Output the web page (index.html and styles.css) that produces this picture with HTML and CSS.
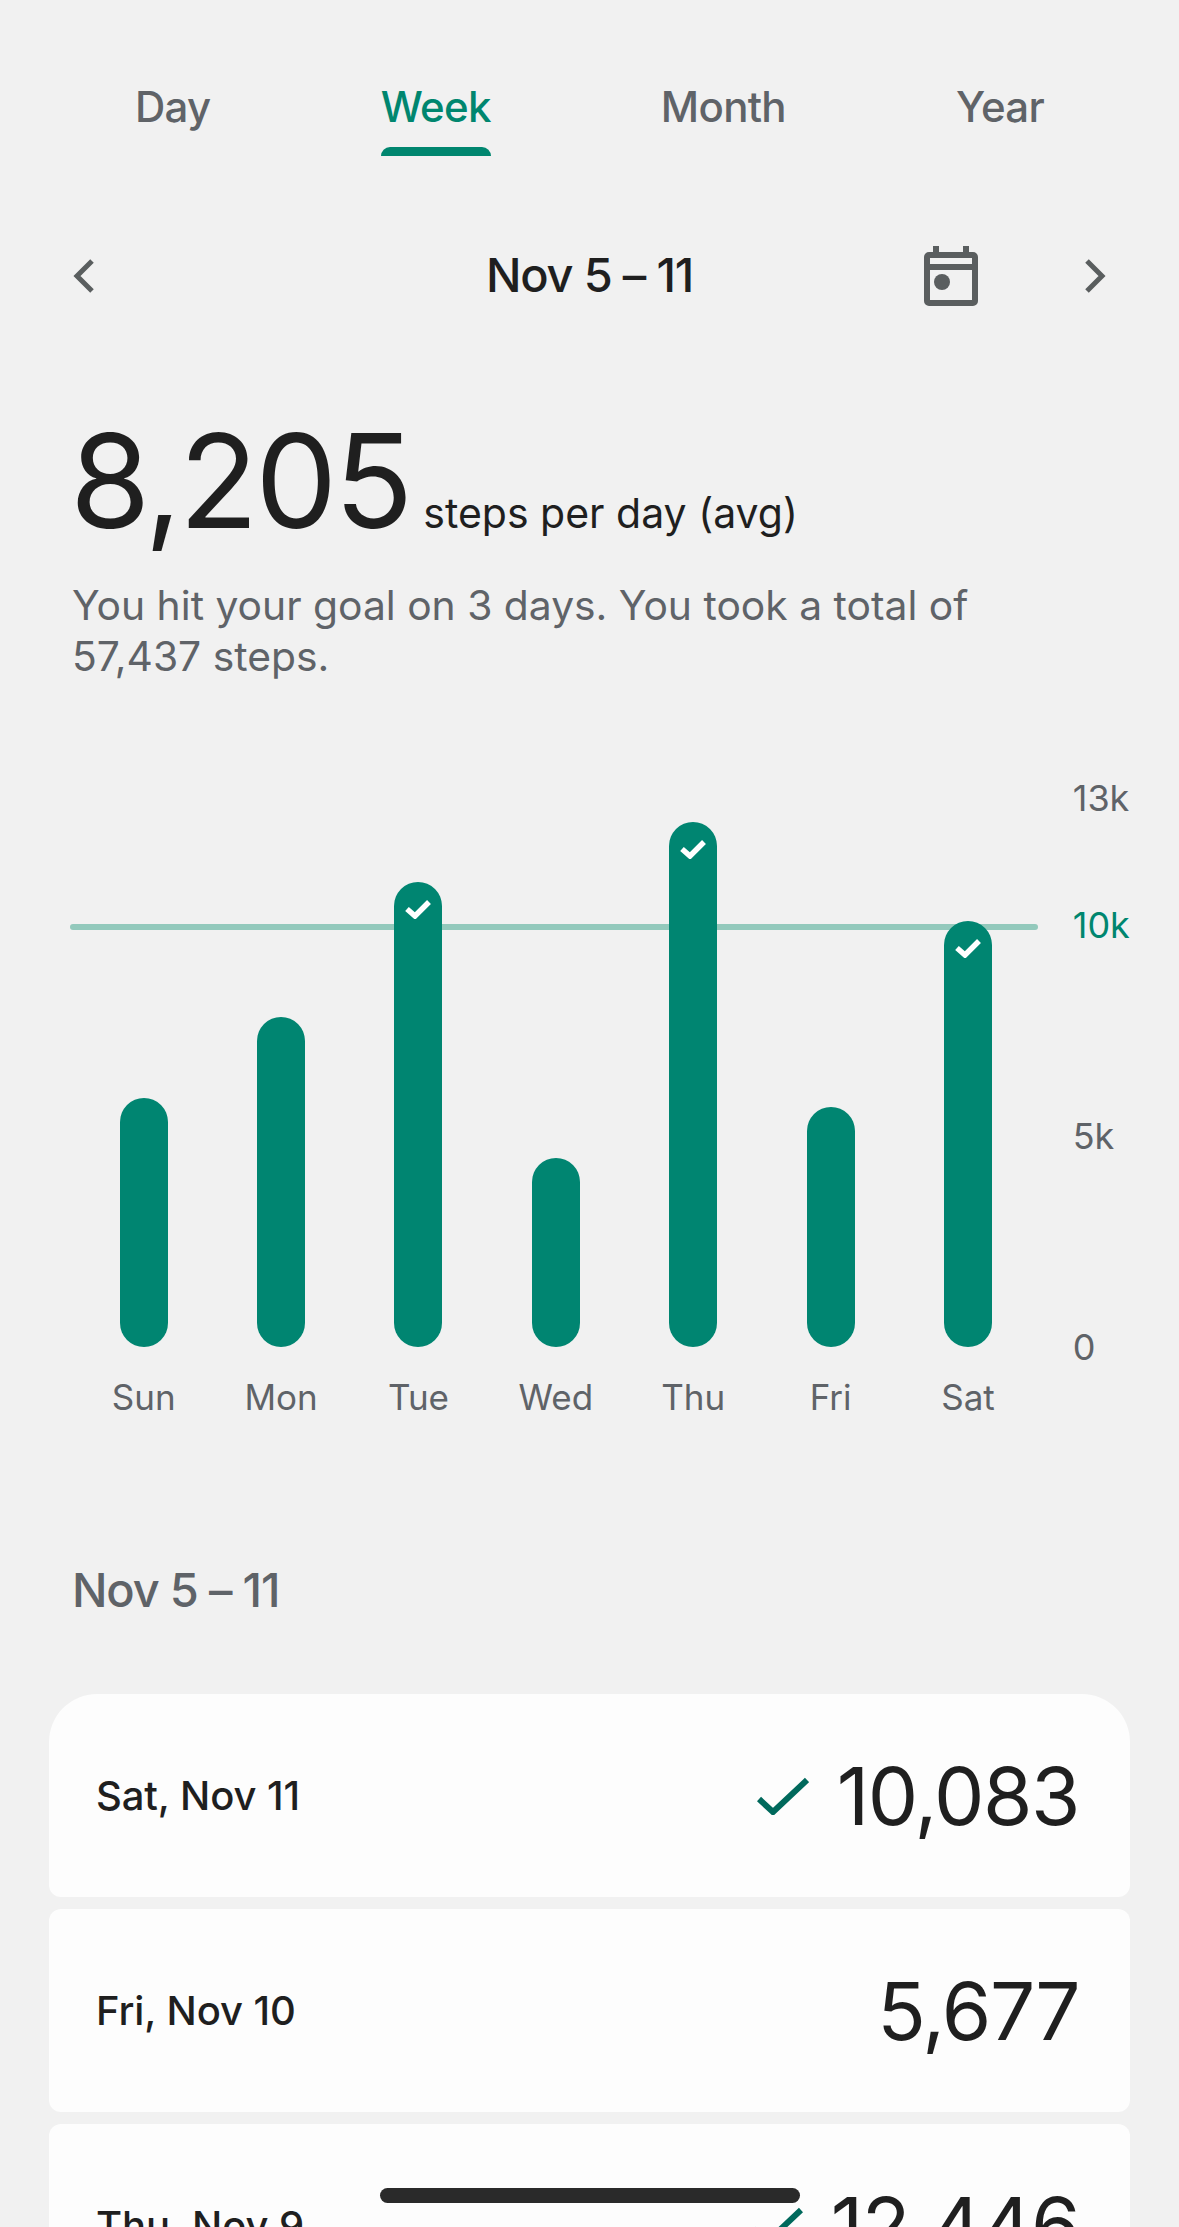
FILE: index.html
```html
<!DOCTYPE html>
<html>

<head>
    <meta charset="utf-8">
    <title>Steps</title>
    <meta name="viewport" content="width=device-width">
    <link rel="stylesheet" href="styles.css">
</head>

<body>
    <nav class="tabs">
        <div class="tab">Day</div>
        <div class="tab active">Week</div>
        <div class="tab">Month</div>
        <div class="tab">Year</div>
    </nav>

    <div class="date-row">
        <div class="date-left">
            <svg class="chevron" viewBox="0 0 22 34"><path d="M19 2 4 17l15 15" /></svg>
        </div>
        <div class="date-title">Nov 5 – 11</div>
        <div class="date-right">
            <svg class="calendar" viewBox="0 0 54 60">
                <path class="calendar-fill" d="M9 0h6v6h24V0h6v6h4a5 5 0 0 1 5 5v44a5 5 0 0 1-5 5H5a5 5 0 0 1-5-5V11a5 5 0 0 1 5-5h4zM6 24v30h42V24zM6 12v6h42v-6z" />
                <circle class="calendar-fill" cx="18" cy="36" r="8" />
            </svg>
            <svg class="chevron" viewBox="0 0 22 34"><path d="M3 2l15 15L3 32" /></svg>
        </div>
    </div>

    <section class="summary">
        <div class="headline"><span class="big-number">8,205</span><span class="unit">steps per day (avg)</span></div>
        <p class="note">You hit your goal on 3 days. You took a total of<br>57,437 steps.</p>
    </section>

    <section class="chart">
        <div class="plot">
            <div class="goal-line"></div>
            <div class="day">
                <div class="bar" style="height: 249px"></div>
                <div class="day-label">Sun</div>
            </div>
            <div class="day">
                <div class="bar" style="height: 330px"></div>
                <div class="day-label">Mon</div>
            </div>
            <div class="day">
                <div class="bar" style="height: 465px"><svg class="bar-check" viewBox="0 0 26 20"><path d="M2 10l8 7L24 3" /></svg></div>
                <div class="day-label">Tue</div>
            </div>
            <div class="day">
                <div class="bar" style="height: 189px"></div>
                <div class="day-label">Wed</div>
            </div>
            <div class="day">
                <div class="bar" style="height: 525px"><svg class="bar-check" viewBox="0 0 26 20"><path d="M2 10l8 7L24 3" /></svg></div>
                <div class="day-label">Thu</div>
            </div>
            <div class="day">
                <div class="bar" style="height: 240px"></div>
                <div class="day-label">Fri</div>
            </div>
            <div class="day">
                <div class="bar" style="height: 426px"><svg class="bar-check" viewBox="0 0 26 20"><path d="M2 10l8 7L24 3" /></svg></div>
                <div class="day-label">Sat</div>
            </div>
        </div>
        <div class="axis">
            <div>13k</div>
            <div class="axis-goal">10k</div>
            <div>5k</div>
            <div>0</div>
        </div>
    </section>

    <h2 class="list-title">Nov 5 – 11</h2>

    <section class="rows">
        <div class="row">
            <div class="row-date">Sat, Nov 11</div>
            <svg class="row-check" viewBox="0 0 52 38"><path d="M2 22l14 13L50 3" /></svg>
            <div class="row-value">10,083</div>
        </div>
        <div class="row">
            <div class="row-date">Fri, Nov 10</div>
            <div class="row-value">5,677</div>
        </div>
        <div class="row">
            <div class="row-date">Thu, Nov 9</div>
            <svg class="row-check" viewBox="0 0 52 38"><path d="M2 22l14 13L50 3" /></svg>
            <div class="row-value">12,446</div>
        </div>
    </section>

    <div class="home-bar"></div>
</body>

</html>
```

FILE: styles.css
```css
html,
body {
    height: 2227px;
    overflow: hidden;
}

body {
    margin: 0;
    position: relative;
    background-color: #f1f1f1;
    color: #1f1f1f;
    font-family: Inter, "Noto Sans", sans-serif;
}

.tabs {
    display: flex;
    justify-content: space-between;
    padding: 82px 135px 0;
}

.tab {
    font-size: 42px;
    line-height: 50px;
    font-weight: 500;
    letter-spacing: -0.7px;
    color: #5f6368;
}

.tab::after {
    content: "";
    display: block;
    height: 9px;
    margin-top: 15px;
    border-radius: 9px 9px 0 0;
}

.tab.active {
    color: #00866f;
}

.tab.active::after {
    background-color: #00866f;
}

.date-row {
    display: grid;
    grid-template-columns: 1fr auto 1fr;
    align-items: center;
    height: 60px;
    margin-top: 90px;
    padding: 0 73px;
}

.date-left {
    display: flex;
}

.date-right {
    display: flex;
    justify-content: flex-end;
    align-items: center;
    gap: 106px;
}

.date-title {
    padding-bottom: 3px;
    font-size: 47px;
    font-weight: 500;
    letter-spacing: -1.2px;
    color: #1f1f1f;
}

.chevron {
    width: 22px;
    height: 34px;
    fill: none;
    stroke: #5a5e5f;
    stroke-width: 5;
}

.calendar {
    width: 54px;
    height: 60px;
}

.calendar-fill {
    fill: #5a5e5f;
    fill-rule: evenodd;
}

.summary {
    padding: 0 73px;
    margin-top: 100px;
}

.headline {
    display: flex;
    align-items: baseline;
    gap: 13px;
    margin-left: -3px;
}

.big-number {
    font-size: 130px;
    line-height: 150px;
    letter-spacing: -3px;
    color: #1f1f1f;
}

.unit {
    font-size: 41px;
    color: #1f1f1f;
}

.note {
    margin: 24px 0 0 -1px;
    font-size: 40.8px;
    line-height: 51px;
    color: #5f6368;
}

.chart {
    display: flex;
    gap: 36px;
    margin-top: 116px;
    padding-left: 75px;
}

.plot {
    position: relative;
    display: grid;
    grid-template-columns: repeat(7, 137.4px);
    grid-template-rows: 549px;
}

.goal-line {
    position: absolute;
    left: -5px;
    top: 126px;
    width: 968px;
    height: 6px;
    border-radius: 3px;
    background-color: #93c9bc;
}

.day {
    position: relative;
    display: flex;
    flex-direction: column;
    justify-content: flex-end;
    align-items: center;
    height: 549px;
}

.bar {
    flex: none;
    width: 48px;
    border-radius: 24px;
    background-color: #008571;
    text-align: center;
}

.bar-check {
    display: block;
    width: 26px;
    height: 20px;
    margin: 17px auto 0;
    fill: none;
    stroke: #fff;
    stroke-width: 5.5;
}

.day-label {
    position: absolute;
    top: 100%;
    margin-top: 28px;
    font-size: 35px;
    line-height: 44px;
    color: #5f6368;
}

.axis {
    display: grid;
    grid-template-rows: 127px 211px 211px 40px;
    margin-top: -20px;
    font-size: 36px;
    line-height: 40px;
    color: #5f6368;
}

.axis-goal {
    color: #00866f;
}

.list-title {
    margin: 193px 0 0;
    padding-left: 72px;
    font-size: 47px;
    line-height: 60px;
    font-weight: 500;
    letter-spacing: -1.2px;
    color: #5f6368;
}

.rows {
    display: flex;
    flex-direction: column;
    gap: 12px;
    margin: 74px 49px 0;
}

.row {
    display: flex;
    align-items: center;
    flex: none;
    height: 203px;
    padding: 0 51px 0 47px;
    border-radius: 12px;
    background-color: #fdfdfd;
}

.row:first-child {
    border-radius: 48px 48px 12px 12px;
}

.row-date {
    flex: 1;
    font-size: 40px;
    font-weight: 500;
    letter-spacing: -0.1px;
    color: #1f1f1f;
}

.row-check {
    width: 52px;
    height: 38px;
    margin-right: 28px;
    fill: none;
    stroke: #00695c;
    stroke-width: 6;
}

.row-value {
    font-size: 80px;
    letter-spacing: -1.5px;
    color: #1f1f1f;
}

.home-bar {
    position: absolute;
    left: 380px;
    top: 2188px;
    width: 420px;
    height: 15px;
    border-radius: 8px;
    background-color: #2a2a2a;
}
```
